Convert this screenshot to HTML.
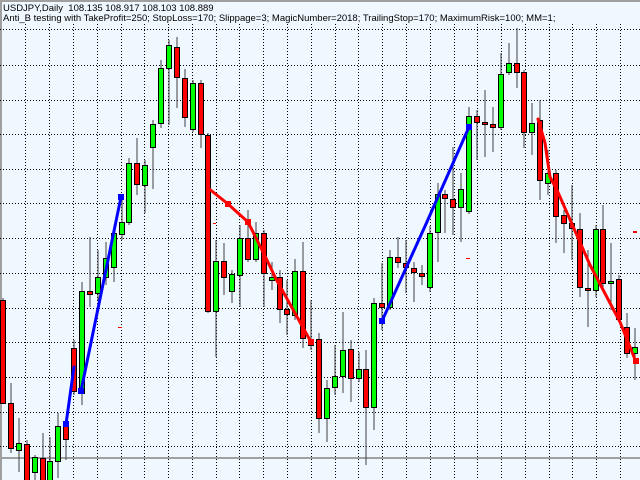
<!DOCTYPE html>
<html><head><meta charset="utf-8"><style>
html,body{margin:0;padding:0;background:#f0f8ff;width:640px;height:480px;overflow:hidden}
.t{position:absolute;left:3px;font:9.5px "Liberation Sans",sans-serif;color:#000;white-space:nowrap;letter-spacing:0px}
</style></head><body>
<svg width="640" height="480" style="position:absolute;left:0;top:0" xmlns="http://www.w3.org/2000/svg">
<rect x="0" y="0" width="640" height="480" fill="#f0f8ff"/>
<rect x="0" y="0" width="640" height="2" fill="#a0a0a0"/>
<rect x="0" y="0" width="2" height="480" fill="#a0a0a0"/>
<g stroke="#000" stroke-width="1" stroke-dasharray="1,2" shape-rendering="crispEdges">
<line x1="0" x2="640" y1="29.5" y2="29.5"/><line x1="0" x2="640" y1="65.5" y2="65.5"/><line x1="0" x2="640" y1="100.5" y2="100.5"/><line x1="0" x2="640" y1="134.5" y2="134.5"/><line x1="0" x2="640" y1="169.5" y2="169.5"/><line x1="0" x2="640" y1="203.5" y2="203.5"/><line x1="0" x2="640" y1="238.5" y2="238.5"/><line x1="0" x2="640" y1="273.5" y2="273.5"/><line x1="0" x2="640" y1="308.5" y2="308.5"/><line x1="0" x2="640" y1="342.5" y2="342.5"/><line x1="0" x2="640" y1="377.5" y2="377.5"/><line x1="0" x2="640" y1="412.5" y2="412.5"/><line x1="0" x2="640" y1="446.5" y2="446.5"/>
<line y1="24" y2="480" x1="25.5" x2="25.5"/><line y1="24" y2="480" x1="49.5" x2="49.5"/><line y1="24" y2="480" x1="73.5" x2="73.5"/><line y1="24" y2="480" x1="97.5" x2="97.5"/><line y1="24" y2="480" x1="121.5" x2="121.5"/><line y1="24" y2="480" x1="144.5" x2="144.5"/><line y1="24" y2="480" x1="168.5" x2="168.5"/><line y1="24" y2="480" x1="192.5" x2="192.5"/><line y1="24" y2="480" x1="216.5" x2="216.5"/><line y1="24" y2="480" x1="239.5" x2="239.5"/><line y1="24" y2="480" x1="263.5" x2="263.5"/><line y1="24" y2="480" x1="287.5" x2="287.5"/><line y1="24" y2="480" x1="311.5" x2="311.5"/><line y1="24" y2="480" x1="335.5" x2="335.5"/><line y1="24" y2="480" x1="358.5" x2="358.5"/><line y1="24" y2="480" x1="382.5" x2="382.5"/><line y1="24" y2="480" x1="406.5" x2="406.5"/><line y1="24" y2="480" x1="430.5" x2="430.5"/><line y1="24" y2="480" x1="454.5" x2="454.5"/><line y1="24" y2="480" x1="477.5" x2="477.5"/><line y1="24" y2="480" x1="501.5" x2="501.5"/><line y1="24" y2="480" x1="525.5" x2="525.5"/><line y1="24" y2="480" x1="549.5" x2="549.5"/><line y1="24" y2="480" x1="572.5" x2="572.5"/><line y1="24" y2="480" x1="596.5" x2="596.5"/><line y1="24" y2="480" x1="620.5" x2="620.5"/>
</g>
<rect x="0" y="457" width="640" height="2" fill="#a0a0a0"/>
<g id="c" stroke="#000" stroke-width="1" shape-rendering="crispEdges"></g>
<g stroke="#0000ff" stroke-width="3" fill="none" stroke-linecap="round">
<polyline points="66,424 74,367"/>
<polyline points="81,391 121,197"/>
<polyline points="382,321 426,224 469,127"/>
</g>
<g fill="#0000ff"><rect x="63" y="421" width="6" height="6"/><rect x="78" y="388" width="6" height="6"/><rect x="118" y="194" width="6" height="6"/><rect x="379" y="318" width="6" height="6"/><rect x="466" y="124" width="6" height="6"/></g>
<g stroke="#ff0000" stroke-width="3" fill="none" stroke-linecap="round">
<polyline points="208,188 228,204 248,222 266,258 276,279 311,342"/>
<polyline points="538,119 545,143 550,177 557,190 590,265 620,322 636,362"/>
</g>
<g fill="#ff0000"><rect x="308" y="339" width="6" height="6"/><rect x="245" y="219" width="6" height="6"/><rect x="225" y="201" width="6" height="6"/><rect x="633" y="358" width="6" height="6"/><rect x="118" y="327" width="4" height="1"/><rect x="466" y="258" width="4" height="1"/><rect x="633" y="231" width="4" height="2"/><rect x="213" y="223" width="3" height="1"/></g>
</svg>
<div class="t" style="top:3px">USDJPY,Daily&nbsp; 108.135 108.917 108.103 108.889</div>
<div class="t" style="top:13px">Anti_B testing with TakeProfit=250; StopLoss=170; Slippage=3; MagicNumber=2018; TrailingStop=170; MaximumRisk=100; MM=1;</div>
<script>
var d=[
[0,'r',300,403,298,403],[1,'r',403,448,383,453],[2,'g',443,450,418,472],[3,'r',444,482,440,482],[4,'g',457,472,455,482],[5,'r',458,482,433,482],[6,'g',461,482,437,482],[7,'g',426,461,413,478],[8,'r',426,439,420,460],[9,'r',348,391,340,395],[10,'g',291,393,282,405],[11,'r',291,294,237,307],[12,'g',277,293,250,300],[13,'g',258,277,242,285],[14,'g',233,267,225,282],[15,'g',222,234,200,240],[16,'g',163,222,158,225],[17,'r',163,184,138,195],[18,'g',165,185,160,213],[19,'g',124,147,120,189],[20,'g',68,123,60,128],[21,'g',45,68,40,125],[22,'r',47,77,37,108],[23,'r',78,117,69,127],[24,'g',83,129,80,132],[25,'r',83,134,80,148],[26,'r',135,311,133,313],[27,'g',261,311,240,357],[28,'r',261,277,243,295],[29,'g',274,291,270,303],[30,'g',238,275,225,307],[31,'r',238,259,210,262],[32,'g',233,259,222,262],[33,'r',233,273,230,307],[34,'g',277,280,262,290],[35,'r',277,309,270,323],[36,'r',309,314,280,335],[37,'g',271,315,259,320],[38,'r',271,338,242,348],[39,'r',340,345,300,350],[40,'r',339,418,333,433],[41,'g',388,418,380,442],[42,'g',376,387,345,395],[43,'g',350,376,312,393],[44,'r',349,378,340,402],[45,'g',369,378,352,382],[46,'r',369,407,350,465],[47,'g',303,407,298,430],[48,'r',303,307,263,330],[49,'g',257,307,250,310],[50,'r',257,262,237,268],[51,'r',263,267,240,293],[52,'r',268,272,262,302],[53,'r',273,276,265,285],[54,'g',233,287,226,292],[55,'g',194,232,183,262],[56,'r',194,198,190,233],[57,'r',199,207,147,235],[58,'g',189,207,173,242],[59,'g',116,211,107,214],[60,'r',116,122,110,160],[61,'r',122,124,90,157],[62,'r',124,127,107,152],[63,'g',74,127,53,130],[64,'g',63,72,43,75],[65,'r',63,72,28,88],[66,'r',72,132,70,148],[67,'g',123,132,103,155],[68,'r',120,180,100,200],[69,'g',173,183,150,195],[70,'r',173,216,170,243],[71,'r',215,223,210,253],[72,'r',223,228,185,260],[73,'r',229,287,213,297],[74,'r',288,290,250,327],[75,'g',229,290,225,297],[76,'r',229,283,205,290],[77,'g',281,283,243,310],[78,'r',279,319,275,320],[79,'r',327,353,313,358],[80,'g',347,353,328,380]];
var s='';
d.forEach(function(c){var x=Math.round(7.9*c[0])+0.5;var w=x+2.5;
s+='<line x1="'+w+'" x2="'+w+'" y1="'+c[4]+'" y2="'+c[5]+'" stroke="#404040"/>';
var h=Math.max(2,c[3]-c[2]);
s+='<rect x="'+x+'" y="'+(c[2]+0.5)+'" width="5" height="'+h+'" fill="'+(c[1]=='g'?'#00ff00':'#ff0000')+'"/>';});
document.getElementById('c').innerHTML=s;
</script>
</body></html>
